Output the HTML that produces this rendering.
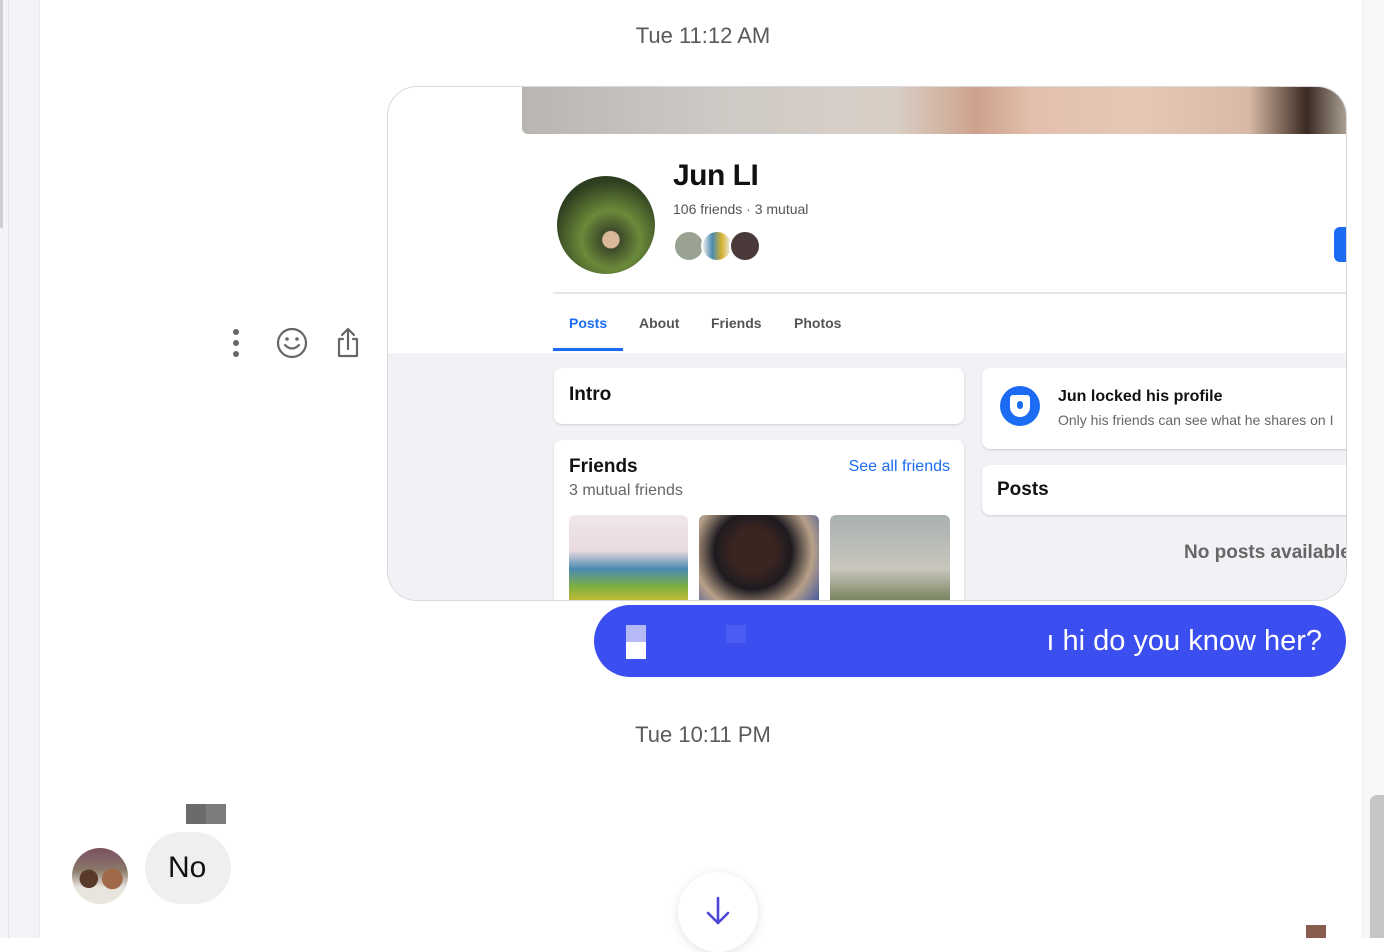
<!DOCTYPE html>
<html><head><meta charset="utf-8"><style>
*{margin:0;padding:0;box-sizing:border-box}
body{width:1384px;height:938px;overflow:hidden;background:#fff;font-family:"Liberation Sans",Arial,sans-serif;position:relative}
.a{position:absolute}
.ts{font-size:22px;color:#5a5a5a;width:300px;text-align:center;left:553px}
.card{background:#fff;border-radius:8px;box-shadow:0 1px 2px rgba(0,0,0,.15)}
</style></head><body>
<div class="a" style="left:0;top:0;width:40px;height:938px;background:#f3f4f8;border-right:1px solid #e8e9ee"></div>
<div class="a" style="left:0;top:0;width:3px;height:228px;background:#cfcfd3"></div>
<div class="a" style="left:8px;top:0;width:1px;height:938px;background:#e2e3e8"></div>
<div class="a" style="left:1362px;top:0;width:22px;height:938px;background:#f7f7f8;border-left:1px solid #ececef"></div>
<div class="a" style="left:1370px;top:795px;width:14px;height:143px;background:#c6c6c8;border-radius:7px 0 0 0"></div>

<div class="a ts" style="top:23px">Tue 11:12 AM</div>
<div class="a ts" style="top:722px">Tue 10:11 PM</div>

<!-- action icons -->
<svg class="a" style="left:225px;top:325px" width="140" height="40" viewBox="0 0 140 40">
<g fill="#666"><circle cx="11" cy="7" r="3"/><circle cx="11" cy="18" r="3"/><circle cx="11" cy="29" r="3"/></g>
<g fill="none" stroke="#666" stroke-width="2.2" stroke-linecap="round"><circle cx="67" cy="18" r="14"/><path d="M60 20q7 7 14 0"/></g>
<g fill="#666"><circle cx="62" cy="14" r="1.8"/><circle cx="72" cy="14" r="1.8"/></g>
<g fill="none" stroke="#666" stroke-width="2.2" stroke-linecap="round" stroke-linejoin="round"><path d="M118 14h-4v17h18v-17h-4M123 24V4M117 10l6-6 6 6"/></g>
</svg>

<!-- screenshot card -->
<div class="a" style="left:387px;top:86px;width:960px;height:515px;border:1px solid #d9d9dc;border-radius:30px;overflow:hidden;background:#fff">
 <div class="a" style="left:134px;top:0;width:826px;height:47px;background:linear-gradient(90deg,#b9b6b2 0%,#cfcac5 25%,#d9cfc6 45%,#cda28c 55%,#e3c0ad 62%,#e6c7b6 75%,#d9b9a6 88%,#3a2a22 95%,#b0a598 100%);border-bottom-left-radius:6px"></div>
 <div class="a" style="left:0;top:266px;width:960px;height:250px;background:#f0f2f5"></div>
 <div class="a" style="left:169px;top:89px;width:98px;height:98px;border-radius:50%;background:radial-gradient(circle at 55% 65%,#d9b89a 0 10%,#3d4a2a 11%,#6b8a3a 35%,#2f4020 70%,#1f2a18)"></div>
 <div class="a" style="left:285px;top:72px;font-size:30px;font-weight:bold;color:#111;letter-spacing:-0.5px">Jun LI</div>
 <div class="a" style="left:285px;top:114px;font-size:14px;color:#555">106 friends · 3 mutual</div>
 <div class="a" style="left:285px;top:143px;width:32px;height:32px;border-radius:50%;background:#9aa391;border:2px solid #fff"></div>
 <div class="a" style="left:313px;top:143px;width:32px;height:32px;border-radius:50%;background:linear-gradient(90deg,#eee,#4a8ab0,#d6b230,#eee);border:2px solid #fff"></div>
 <div class="a" style="left:341px;top:143px;width:32px;height:32px;border-radius:50%;background:#4a3b3a;border:2px solid #fff"></div>
 <div class="a" style="left:946px;top:140px;width:14px;height:35px;background:#1b6cf2;border-radius:6px 0 0 6px"></div>
 <div class="a" style="left:165px;top:205px;width:795px;height:2px;background:#e4e6ea"></div>
 <div class="a" style="left:181px;top:228px;font-size:14px;color:#1b6cf2;font-weight:bold">Posts</div>
 <div class="a" style="left:251px;top:228px;font-size:14px;color:#555;font-weight:bold">About</div>
 <div class="a" style="left:323px;top:228px;font-size:14px;color:#555;font-weight:bold">Friends</div>
 <div class="a" style="left:406px;top:228px;font-size:14px;color:#555;font-weight:bold">Photos</div>
 <div class="a" style="left:165px;top:261px;width:70px;height:3px;background:#1b6cf2"></div>
 <div class="a card" style="left:166px;top:281px;width:410px;height:56px"><div class="a" style="left:15px;top:16px;font-size:19px;font-weight:bold;color:#111">Intro</div></div>
 <div class="a card" style="left:166px;top:353px;width:410px;height:170px">
  <div class="a" style="left:15px;top:16px;font-size:19px;font-weight:bold;color:#111">Friends</div>
  <div class="a" style="right:14px;top:18px;font-size:16px;color:#1b6cf2">See all friends</div>
  <div class="a" style="left:15px;top:42px;font-size:16px;color:#666">3 mutual friends</div>
  <div class="a" style="left:15px;top:75px;width:119px;height:90px;border-radius:6px;background:linear-gradient(180deg,#efe8ea,#e9d9df 40%,#4a8ab0 60%,#80b040 80%,#d6c030)"></div>
  <div class="a" style="left:145px;top:75px;width:120px;height:90px;border-radius:6px;background:radial-gradient(circle at 45% 40%,#3a2520 25%,#1e1a20 45%,#b7a088 70%,#3850a0)"></div>
  <div class="a" style="left:276px;top:75px;width:120px;height:90px;border-radius:6px;background:linear-gradient(180deg,#a9b0b0,#c8c6bd 60%,#6e7a50)"></div>
 </div>
 <div class="a card" style="left:594px;top:281px;width:370px;height:81px">
  <div class="a" style="left:18px;top:18px;width:40px;height:40px;border-radius:50%;background:#1b6cf2"></div>
  <div class="a" style="left:28px;top:27px;width:20px;height:22px;background:#fff;border-radius:3px 3px 10px 10px"></div>
  <div class="a" style="left:35px;top:33px;width:6px;height:8px;background:#1b6cf2;border-radius:3px"></div>
  <div class="a" style="left:76px;top:20px;font-size:16px;font-weight:bold;color:#111">Jun locked his profile</div>
  <div class="a" style="left:76px;top:44px;font-size:14px;color:#666;white-space:nowrap">Only his friends can see what he shares on I</div>
 </div>
 <div class="a card" style="left:594px;top:378px;width:370px;height:50px"><div class="a" style="left:15px;top:14px;font-size:19px;font-weight:bold;color:#111">Posts</div></div>
 <div class="a" style="left:796px;top:455px;font-size:19px;font-weight:bold;color:#666;white-space:nowrap">No posts available</div>
</div>

<!-- blue bubble -->
<div class="a" style="left:594px;top:605px;width:752px;height:72px;border-radius:36px;background:#3b4ef0;overflow:hidden">
 <div class="a" style="left:32px;top:20px;width:20px;height:17px;background:#b6b9f5"></div>
 <div class="a" style="left:32px;top:37px;width:20px;height:17px;background:#fff"></div>
 <div class="a" style="left:132px;top:20px;width:20px;height:18px;background:#4a5cf2"></div>
 <div class="a" style="right:24px;top:20px;font-size:29px;color:#fff;white-space:nowrap">ı hi do you know her?</div>
</div>

<!-- incoming -->
<div class="a" style="left:186px;top:804px;width:40px;height:20px;background:linear-gradient(90deg,#6b6b6b 50%,#7c7c7c 50%)"></div>
<div class="a" style="left:72px;top:848px;width:56px;height:56px;border-radius:50%;background:radial-gradient(circle at 30% 55%,#5a3a2a 0 18%,transparent 19%),radial-gradient(circle at 72% 55%,#a06a4a 0 20%,transparent 21%),linear-gradient(180deg,#7a5060,#8a7a6a 40%,#e8e4de 70%)"></div>
<div class="a" style="left:145px;top:832px;width:86px;height:72px;border-radius:36px;background:#efefef"></div>
<div class="a" style="left:168px;top:851px;font-size:30px;color:#111">No</div>

<!-- down button -->
<div class="a" style="left:678px;top:872px;width:80px;height:80px;border-radius:50%;background:#fff;box-shadow:0 2px 10px rgba(0,0,0,.12)"></div>
<svg class="a" style="left:704px;top:895px" width="28" height="32" viewBox="0 0 28 32"><path d="M14 3v25M4 18l10 10 10-10" fill="none" stroke="#4b45d8" stroke-width="2.6" stroke-linecap="round" stroke-linejoin="round"/></svg>
<div class="a" style="left:1306px;top:925px;width:20px;height:13px;background:#8a5c50"></div>
</body></html>
